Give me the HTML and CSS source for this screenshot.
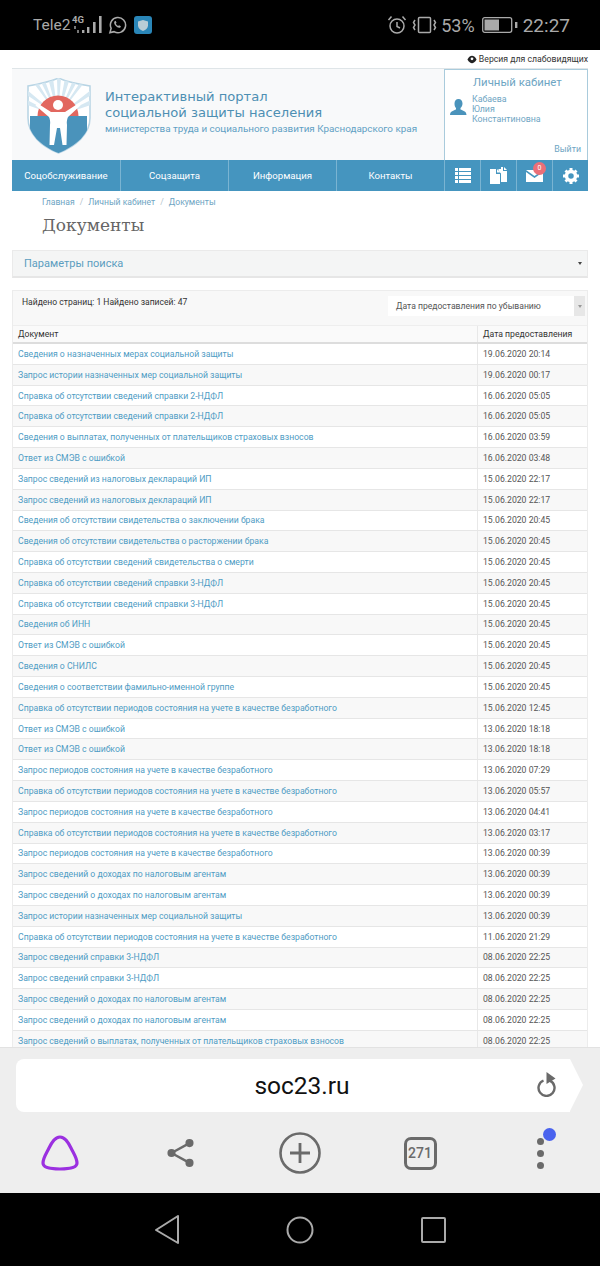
FILE: index.html
```html
<!DOCTYPE html>
<html lang="ru">

<head>
    <meta charset="utf-8">
    <meta name="viewport" content="width=device-width, initial-scale=1.0">
    <title>Документы</title>
    <link rel="stylesheet" href="styles.css">
</head>

<body>
    <div class="statusbar">
        <div class="status-left">
            <span class="operator">Tele2</span>
            <svg class="net" width="36" height="20" viewBox="0 0 36 20">
                <text x="2" y="8" class="net-text">4G</text>
                <path d="M5 11v3M8 15v3" stroke="#aaa" stroke-width="1.400"/>
                <rect x="12" y="15" width="2.400" height="3" fill="#aaa"/>
                <rect x="17" y="12" width="2.400" height="6" fill="#aaa"/>
                <rect x="23" y="7" width="2.600" height="11" fill="#aaa"/>
                <rect x="29" y="1" width="2.600" height="17" fill="#aaa"/>
            </svg>
            <svg class="whatsapp" width="19" height="20" viewBox="0 0 20 20" fill="none" stroke="#aaa" stroke-width="1.600">
                <path d="M2 18l1.300-4.400A8 8 0 1 1 6.400 17z"/>
                <path d="M7 6c-1 1-.6 3 1 4.800s3.500 2.600 5 1.700l.6-1.300-2-1-1 .8c-1-.4-2-1.500-2.400-2.500l.8-1-1-2z" fill="#aaa" stroke="none"/>
            </svg>
            <svg class="shield-app" width="18" height="20" viewBox="0 0 18 20">
                <rect x="0" y="1" width="18" height="18" rx="3" fill="#2a86b8"/>
                <path d="M9 5l5 1.500v4c0 2.500-2 4.500-5 5.500-3-1-5-3-5-5.500v-4z" fill="#b9ccd6"/>
            </svg>
        </div>
        <div class="status-right">
            <svg class="alarm" width="20" height="20" viewBox="0 0 20 20" fill="none" stroke="#aaa" stroke-width="1.500">
                <circle cx="10" cy="11" r="7"/>
                <path d="M10 7v4.500l3 1.500M1.500 5l3-3.500M18.500 5l-3-3.500"/>
            </svg>
            <svg class="vibrate" width="25" height="20" viewBox="0 0 25 20" fill="none" stroke="#aaa" stroke-width="1.500">
                <rect x="6.500" y="2.500" width="12" height="15" rx="1"/>
                <path d="M3 5l-1.500 2.500L3 10l-1.500 2.500L3 15M22 5l1.500 2.500L22 10l1.500 2.500L22 15"/>
            </svg>
            <span class="percent">53%</span>
            <svg class="battery" width="36" height="20" viewBox="0 0 36 20">
                <rect x=".7" y="2.700" width="29" height="14.600" rx="2" fill="none" stroke="#aaa" stroke-width="1.300"/>
                <rect x="2.500" y="4.500" width="14.500" height="11" fill="#aaa"/>
                <rect x="33" y="7" width="2.400" height="6" fill="#aaa"/>
            </svg>
            <span class="clock">22:27</span>
        </div>
    </div>

    <div class="page">
        <div class="topline">
            <svg width="10" height="9" viewBox="0 0 11 9">
                <path d="M.5 4.500C2 1.500 4 .5 5.500 .5S9 1.500 10.500 4.500C9 7.500 7 8.500 5.500 8.500S2 7.500 .5 4.500z" fill="#222"/>
                <circle cx="5.500" cy="3.800" r="1.500" fill="#fff"/>
            </svg>
            <span>Версия для слабовидящих</span>
        </div>

        <header class="site-header">
            <div class="brand">
                <svg class="logo" width="64" height="76" viewBox="0 0 64 76">
                    <defs>
                        <clipPath id="shield">
                            <path d="M1 8C12 6 23 4 31.500 0 40 4 51 6 63 8v32c0 16-14 28-31.500 35C14 68 1 56 1 40z"/>
                        </clipPath>
                    </defs>
                    <path d="M1 8C12 6 23 4 31.500 0 40 4 51 6 63 8v32c0 16-14 28-31.500 35C14 68 1 56 1 40z" fill="#fff" stroke="#b7d4e4" stroke-width="1.500"/>
                    <g clip-path="url(#shield)">
                        <path d="M31 38L3 0h5zM31 38L12 0h5zM31 38L21 0h5zM31 38L30 0h4zM31 38L38 0h5zM31 38L47 0h5zM31 38L56 0h5zM31 38L0 12v5zM31 38L0 22v5zM31 38L64 12v5zM31 38L64 22v5z" fill="#d6e8f2"/>
                        <circle cx="31" cy="38" r="20.500" fill="#e2675f"/>
                        <rect x="3" y="38" width="57" height="38" fill="#4a93bb"/>
                    </g>
                    <circle cx="31" cy="27" r="5" fill="#fff"/>
                    <path d="M10 25l14 9h14l14-9 1.500 2.500L41 39c-1 2-1.500 5-1 8l-.5 20h-4L33 50h-3l-3 17h-4.500l.5-20c.5-3 0-6-1-8L8.500 27.500z" fill="#fff"/>
                </svg>
                <div class="brand-text">
                    <div class="brand-title">Интерактивный портал<br>социальной защиты населения</div>
                    <div class="brand-sub">министерства труда и социального развития Краснодарского края</div>
                </div>
            </div>
            <div class="cabinet">
                <div class="cabinet-title">Личный кабинет</div>
                <div class="cabinet-user">
                    <svg width="17" height="16" viewBox="0 0 17 16">
                        <path d="M8.500 0c2.500 0 4 2 4 4.500 0 2-1 3.500-2 4.500v1.500c2 1 6 1.500 6 5.500H0c0-4 4-4.500 6-5.500V9C5 8 4.500 6.500 4.500 4.500 4.500 2 6 0 8.500 0z" fill="#4a93bb"/>
                    </svg>
                    <div class="cabinet-name">Кабаева<br>Юлия<br>Константиновна</div>
                </div>
                <a class="logout">Выйти</a>
            </div>
            <nav class="menu">
                <a>Соцобслуживание</a>
                <a>Соцзащита</a>
                <a>Информация</a>
                <a>Контакты</a>
            </nav>
            <div class="tools">
                <a>
                    <svg width="16" height="15" viewBox="0 0 16 15" fill="#fff">
                        <rect y="0" width="3" height="3"/><rect x="4" y="0" width="12" height="3"/>
                        <rect y="4" width="3" height="3"/><rect x="4" y="4" width="12" height="3"/>
                        <rect y="8" width="3" height="3"/><rect x="4" y="8" width="12" height="3"/>
                        <rect y="12" width="3" height="3"/><rect x="4" y="12" width="12" height="3"/>
                    </svg>
                </a>
                <a>
                    <svg width="17" height="17" viewBox="0 0 17 17" fill="#fff">
                        <path d="M0 2h6v5h4v10H0zM7 2l3 3.500H7z"/>
                        <path d="M11 0l2 .1V4h4v11h-6V6.500L8.500 4V2H11z"/>
                        <path d="M14 0l3 3h-3z"/>
                    </svg>
                </a>
                <a class="mail">
                    <svg width="17" height="12" viewBox="0 0 17 12" fill="#fff">
                        <path d="M0 0h17L8.500 6z"/>
                        <path d="M0 2l8.500 6L17 2v10H0z"/>
                    </svg>
                    <span class="badge">0</span>
                </a>
                <a>
                    <svg width="16" height="16" viewBox="0 0 16 16">
                        <circle cx="8" cy="8" r="4.500" fill="none" stroke="#fff" stroke-width="3.500"/>
                        <path d="M6.500 0h3v3h-3zM6.500 13h3v3h-3zM0 6.500h3v3H0zM13 6.500h3v3h-3zM1.500 3.600l2-2 2 2-2 2zM10.500 3.600l2-2 2 2-2 2zM1.500 12.400l2 2 2-2-2-2zM10.500 12.400l2 2 2-2-2-2z" fill="#fff"/>
                    </svg>
                </a>
            </div>
        </header>

        <ul class="crumbs">
            <li>Главная</li>
            <li>Личный кабинет</li>
            <li>Документы</li>
        </ul>
        <h1>Документы</h1>

        <div class="search">
            <span>Параметры поиска</span>
            <i class="caret"></i>
        </div>

        <section class="results">
            <div class="results-top">
                <span class="found">Найдено страниц: 1 Найдено записей: 47</span>
                <div class="sort">
                    <span>Дата предоставления по убыванию</span>
                    <b><i class="caret small"></i></b>
                </div>
            </div>
            <div class="grid-head">
                <span>Документ</span>
                <span>Дата предоставления</span>
            </div>
            <div id="rows"></div>
        </section>
    </div>

    <div class="browser">
        <div class="address">
            <span>soc23.ru</span>
            <svg class="reload" width="20" height="25" viewBox="0 0 20 25" fill="none">
                <path d="M6.500 8.500a8 8 0 1 0 6.500 .2" stroke="#6a6a6a" stroke-width="2.400"/>
                <path d="M9.500 0l9 6.500-9 5.500z" fill="#6a6a6a"/>
            </svg>
        </div>
        <div class="browser-tools">
            <svg width="38" height="36" viewBox="0 0 38 36" fill="none">
                <path d="M19 2c5 0 8 5 11 11 3 6 6 10 6 15 0 5-8 6-17 6S2 33 2 28c0-5 3-9 6-15 3-6 6-11 11-11z" stroke="#9b30e0" stroke-width="3.200"/>
            </svg>
            <svg width="27" height="30" viewBox="0 0 30 32" fill="#6a6a6a">
                <circle cx="25" cy="5" r="4.500"/><circle cx="5" cy="16" r="4.500"/><circle cx="25" cy="27" r="4.500"/>
                <path d="M25 5L5 16l20 11" fill="none" stroke="#6a6a6a" stroke-width="2.600"/>
            </svg>
            <svg width="42" height="42" viewBox="0 0 42 42" fill="none" stroke="#6a6a6a">
                <circle cx="21" cy="21" r="19.500" stroke-width="2.600"/>
                <path d="M11 21h20M21 11v20" stroke-width="2.800"/>
            </svg>
            <div class="tabs">271</div>
            <div class="more">
                <i></i><i></i><i></i>
                <b></b>
            </div>
        </div>
    </div>

    <div class="softkeys">
        <svg width="24" height="30" viewBox="0 0 24 30" fill="none" stroke="#aaa" stroke-width="2" stroke-linejoin="round">
            <path d="M23 1v27L1 15z"/>
        </svg>
        <svg width="28" height="28" viewBox="0 0 28 28" fill="none" stroke="#aaa" stroke-width="2">
            <circle cx="14" cy="14" r="12.500"/>
        </svg>
        <svg width="25" height="26" viewBox="0 0 25 26" fill="none" stroke="#aaa" stroke-width="2">
            <rect x="1" y="1" width="23" height="24" rx="1"/>
        </svg>
    </div>

    <template id="row">
        <div class="grid-row">
            <a class="doc"></a>
            <span class="date"></span>
        </div>
    </template>

    <script>
        const dokumenter = [
            ["Сведения о назначенных мерах социальной защиты", "19.06.2020 20:14"],
            ["Запрос истории назначенных мер социальной защиты", "19.06.2020 00:17"],
            ["Справка об отсутствии сведений справки 2-НДФЛ", "16.06.2020 05:05"],
            ["Справка об отсутствии сведений справки 2-НДФЛ", "16.06.2020 05:05"],
            ["Сведения о выплатах, полученных от плательщиков страховых взносов", "16.06.2020 03:59"],
            ["Ответ из СМЭВ с ошибкой", "16.06.2020 03:48"],
            ["Запрос сведений из налоговых деклараций ИП", "15.06.2020 22:17"],
            ["Запрос сведений из налоговых деклараций ИП", "15.06.2020 22:17"],
            ["Сведения об отсутствии свидетельства о заключении брака", "15.06.2020 20:45"],
            ["Сведения об отсутствии свидетельства о расторжении брака", "15.06.2020 20:45"],
            ["Справка об отсутствии сведений свидетельства о смерти", "15.06.2020 20:45"],
            ["Справка об отсутствии сведений справки 3-НДФЛ", "15.06.2020 20:45"],
            ["Справка об отсутствии сведений справки 3-НДФЛ", "15.06.2020 20:45"],
            ["Сведения об ИНН", "15.06.2020 20:45"],
            ["Ответ из СМЭВ с ошибкой", "15.06.2020 20:45"],
            ["Сведения о СНИЛС", "15.06.2020 20:45"],
            ["Сведения о соответствии фамильно-именной группе", "15.06.2020 20:45"],
            ["Справка об отсутствии периодов состояния на учете в качестве безработного", "15.06.2020 12:45"],
            ["Ответ из СМЭВ с ошибкой", "13.06.2020 18:18"],
            ["Ответ из СМЭВ с ошибкой", "13.06.2020 18:18"],
            ["Запрос периодов состояния на учете в качестве безработного", "13.06.2020 07:29"],
            ["Справка об отсутствии периодов состояния на учете в качестве безработного", "13.06.2020 05:57"],
            ["Запрос периодов состояния на учете в качестве безработного", "13.06.2020 04:41"],
            ["Справка об отсутствии периодов состояния на учете в качестве безработного", "13.06.2020 03:17"],
            ["Запрос периодов состояния на учете в качестве безработного", "13.06.2020 00:39"],
            ["Запрос сведений о доходах по налоговым агентам", "13.06.2020 00:39"],
            ["Запрос сведений о доходах по налоговым агентам", "13.06.2020 00:39"],
            ["Запрос истории назначенных мер социальной защиты", "13.06.2020 00:39"],
            ["Справка об отсутствии периодов состояния на учете в качестве безработного", "11.06.2020 21:29"],
            ["Запрос сведений справки 3-НДФЛ", "08.06.2020 22:25"],
            ["Запрос сведений справки 3-НДФЛ", "08.06.2020 22:25"],
            ["Запрос сведений о доходах по налоговым агентам", "08.06.2020 22:25"],
            ["Запрос сведений о доходах по налоговым агентам", "08.06.2020 22:25"],
            ["Запрос сведений о выплатах, полученных от плательщиков страховых взносов", "08.06.2020 22:25"]
        ];
        const container = document.querySelector("#rows");
        const skabelon = document.querySelector("#row");
        dokumenter.forEach(dok => {
            const klon = skabelon.content.cloneNode(true);
            klon.querySelector(".doc").textContent = dok[0];
            klon.querySelector(".date").textContent = dok[1];
            container.appendChild(klon);
        });
    </script>
</body>

</html>
```

FILE: styles.css
```css
* {
    box-sizing: border-box;
    margin: 0;
    padding: 0;
}

body {
    width: 600px;
    height: 1266px;
    overflow: hidden;
    display: flex;
    flex-direction: column;
    background: #fff;
    font-family: Roboto, "Liberation Sans", sans-serif;
}

/* phone status bar */
.statusbar {
    height: 50px;
    flex: none;
    background: #000;
    color: #aaa;
    display: flex;
    justify-content: space-between;
    align-items: center;
    padding: 0 30px 0 33px;
    font-size: 17px;
}

.status-left,
.status-right {
    display: flex;
    align-items: center;
}

.whatsapp {
    margin-left: 2px;
}

.shield-app {
    margin-left: 7px;
}

.operator {
    font-size: 15.5px;
}

.net-text {
    font-size: 9.5px;
    font-weight: 700;
    fill: #aaa;
}

.vibrate {
    margin: 0 4px 0 5px;
}

.percent {
    font-size: 18px;
    margin-right: 7px;
}

.clock {
    font-size: 19px;
    margin-left: 5px;
}

/* site */
.page {
    flex: 1;
    overflow: hidden;
    padding: 0 12px;
    min-height: 0;
}

.topline {
    height: 18px;
    display: flex;
    justify-content: flex-end;
    align-items: center;
    gap: 2px;
    font-size: 8.7px;
    color: #333;
}

.site-header {
    display: grid;
    grid-template-columns: 432px 1fr;
    grid-template-rows: 91px 31px;
    background: #f8f9fa;
    border-top: 1px solid #dfe5e8;
}

.brand {
    display: flex;
    align-items: flex-start;
    padding: 9px 0 0 15px;
}

.brand-text {
    margin-left: 14px;
    padding-top: 11px;
}

.brand-title {
    font-family: "DejaVu Sans", sans-serif;
    font-size: 13.1px;
    line-height: 16px;
    color: #4d8fb3;
}

.brand-sub {
    font-size: 9.87px;
    line-height: 13px;
    margin-top: 1px;
    color: #5fa0c4;
}

.cabinet {
    position: relative;
    background: #fff;
    border: 1px solid #a9cbdc;
    border-bottom: 0;
    padding: 5px 0 0 28px;
    color: #6ea5c3;
}

.cabinet-title {
    font-size: 11.4px;
    line-height: 15px;
}

.cabinet-user {
    display: flex;
    margin: 4px 0 0 -22px;
    font-size: 8.8px;
    line-height: 10px;
}

.cabinet-user svg {
    margin: 5px 5px 0 -1px;
    flex: none;
}

.logout {
    position: absolute;
    right: 6px;
    bottom: 6px;
    font-size: 8.8px;
}

.menu {
    display: grid;
    grid-template-columns: repeat(4, 1fr);
    background: #4595bf;
}

.menu a {
    display: flex;
    align-items: center;
    justify-content: center;
    font-size: 9.65px;
    color: #fff;
    border-left: 1px solid #7ab4d2;
}

.menu a:first-child {
    border-left: 0;
}

.tools {
    display: grid;
    grid-template-columns: 36px 36px 36px 1fr;
    background: #4595bf;
}

.tools a {
    position: relative;
    display: flex;
    align-items: center;
    justify-content: center;
    border-left: 1px solid #7ab4d2;
}

.badge {
    position: absolute;
    top: 2px;
    right: 6px;
    width: 13px;
    height: 13px;
    border-radius: 50%;
    background: #ea6f78;
    color: #fff;
    font-size: 7px;
    line-height: 13px;
    text-align: center;
}

.crumbs {
    list-style: none;
    display: flex;
    padding: 0 0 0 30px;
    height: 21px;
    align-items: center;
    font-size: 8.6px;
    color: #6ea5c3;
}

.crumbs li+li::before {
    content: "/";
    color: #b5c3cb;
    margin: 0 5px;
}

h1 {
    font-family: "DejaVu Serif", serif;
    font-weight: 400;
    font-size: 17px;
    line-height: 24px;
    margin: 1px 0 13px 30px;
    color: #666;
}

.search {
    height: 28px;
    display: flex;
    justify-content: space-between;
    align-items: center;
    padding: 0 5px 0 11px;
    background: #f4f5f5;
    border: 1px solid #eaeaea;
    border-bottom: 2px solid #e6e6e6;
    font-size: 11px;
    color: #5b9dc0;
}

.caret {
    width: 0;
    height: 0;
    border: 2.5px solid transparent;
    border-top: 3.5px solid #444;
    border-bottom: 0;
}

.caret.small {
    border-top-color: #999;
}

.results {
    margin-top: 12px;
    border: 1px solid #ececec;
    border-bottom: 0;
}

.results-top {
    height: 34px;
    display: flex;
    justify-content: space-between;
    align-items: flex-start;
    background: #f8f8f8;
    padding: 0 2px 0 9px;
    font-size: 8.55px;
    color: #333;
}

.found {
    margin-top: 6px;
}

.sort {
    width: 197px;
    height: 20px;
    margin-top: 5px;
    display: flex;
    justify-content: space-between;
    align-items: center;
    background: #fff;
    padding-left: 8px;
    color: #555;
    font-size: 8.6px;
}

.sort b {
    width: 11px;
    height: 20px;
    background: #e7e7e7;
    display: flex;
    justify-content: center;
    align-items: center;
}

.grid-head,
.grid-row {
    display: grid;
    grid-template-columns: 464px 1fr;
    font-size: 8.67px;
}

.grid-head {
    height: 19px;
    background: #fafafa;
    border-top: 1px solid #eee;
    border-bottom: 2px solid #ddd;
    color: #333;
}

.grid-head span,
.grid-row a,
.grid-row span {
    display: flex;
    align-items: center;
    padding-left: 5px;
}

.grid-head span+span,
.grid-row span {
    border-left: 1px solid #e8e8e8;
}

.grid-row {
    height: 20.82px;
    border-bottom: 1px solid #e6e6e6;
}

.grid-row:nth-child(even) {
    background: #f8f8f8;
}

.doc {
    color: #4f9cc4;
}

.date {
    color: #555;
}

/* browser chrome */
.browser {
    flex: none;
    height: 146px;
    background: #eee;
    border-top: 1px solid #e2e2e2;
    padding: 11px 0 0 16px;
}

.address {
    position: relative;
    width: 554px;
    height: 53px;
    padding-left: 18px;
    background: #fff;
    border-radius: 8px 0 0 8px;
    display: flex;
    align-items: center;
    justify-content: center;
    font-size: 24.5px;
    color: #111;
}

.address::after {
    content: "";
    position: absolute;
    left: 554px;
    top: 0;
    border-left: 13px solid #fff;
    border-top: 26.5px solid transparent;
    border-bottom: 26.5px solid transparent;
}

.reload {
    position: absolute;
    right: 13px;
    top: 13px;
}

.browser-tools {
    display: grid;
    grid-template-columns: repeat(5, 120px);
    align-items: center;
    justify-items: center;
    width: 600px;
    margin: 20px 0 0 -16px;
}

.tabs {
    width: 33px;
    height: 33px;
    border: 3px solid #6a6a6a;
    border-radius: 7px;
    display: flex;
    align-items: center;
    justify-content: center;
    font-size: 14px;
    font-weight: 500;
    color: #6a6a6a;
}

.more {
    position: relative;
    display: flex;
    flex-direction: column;
    gap: 5px;
}

.more i {
    width: 7px;
    height: 7px;
    border-radius: 50%;
    background: #6a6a6a;
}

.more b {
    position: absolute;
    top: -10px;
    left: 6px;
    width: 13px;
    height: 13px;
    border-radius: 50%;
    background: #4a63ee;
}

/* android keys */
.softkeys {
    flex: none;
    height: 73px;
    background: #000;
    display: flex;
    justify-content: center;
    align-items: center;
    gap: 107px;
}
```
